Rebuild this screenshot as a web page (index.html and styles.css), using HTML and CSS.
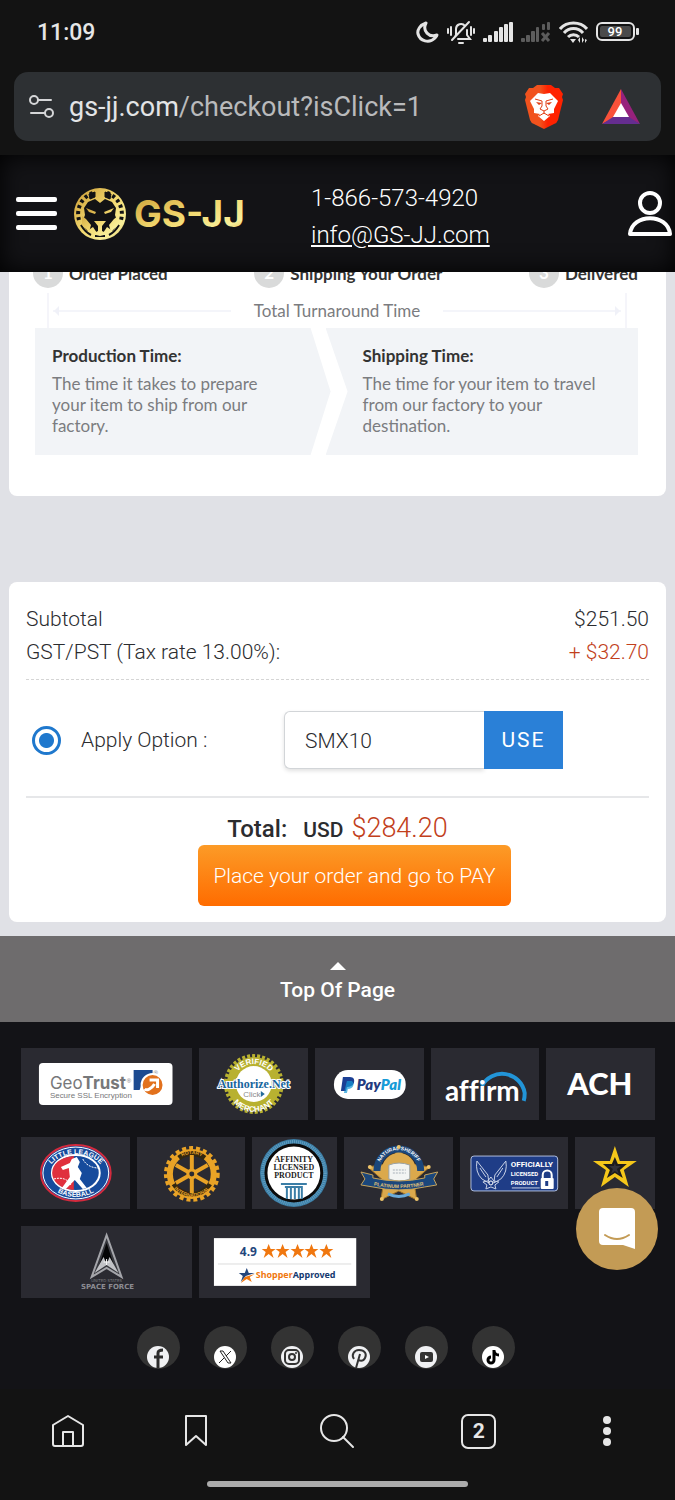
FILE: index.html
```html
<!DOCTYPE html>
<html lang="en">
<head>
    <meta charset="UTF-8">
    <meta name="viewport" content="width=device-width, initial-scale=1.0">
    <title>GS-JJ Checkout</title>
    <link rel="stylesheet" href="styles.css">
</head>
<body>

    <!-- phone status bar -->
    <div class="status-bar">
        <span class="time">11:09</span>
        <div class="status-icons">
            <svg width="23" height="24" viewBox="0 0 23 24"><path d="M10 3C4 5 1 10 2 14c2 7 11 10 17 4 1-1 2-2 2-3-8 3-15-4-11-12z" fill="none" stroke="#e4e4e4" stroke-width="3" stroke-linejoin="round"/></svg>
            <svg width="28" height="26" viewBox="0 0 28 26" fill="none" stroke="#e4e4e4" stroke-width="2" stroke-linecap="round"><path d="M7 19l2-3V10a5 5 0 0 1 9-3M20 11v5l3 4H11M12 24h4M5 21L22 3M4 8v8M1 10v4M24 8v8M27 10v4"/></svg>
            <svg width="30" height="22" viewBox="0 0 30 22" fill="#e4e4e4"><rect x="0" y="17" width="4" height="4" rx="1"/><rect x="5" y="14" width="4" height="7" rx="1"/><rect x="11" y="10" width="4" height="11" rx="1"/><rect x="16" y="6" width="4" height="15" rx="1"/><rect x="21" y="3" width="4" height="18" rx="1"/><rect x="26" y="1" width="4" height="20" rx="1"/></svg>
            <svg width="30" height="22" viewBox="0 0 30 22" fill="#5c5c5c"><rect x="0" y="17" width="4" height="4" rx="1"/><rect x="5" y="14" width="4" height="7" rx="1"/><rect x="10" y="10" width="4" height="11" rx="1"/><rect x="15" y="6" width="3" height="15" rx="1"/><rect x="21" y="3" width="3" height="6" rx="1"/><rect x="26" y="1" width="3" height="8" rx="1"/><path d="M21 12l7 8M28 12l-7 8" stroke="#5c5c5c" stroke-width="3"/></svg>
            <svg width="29" height="24" viewBox="0 0 29 24"><path d="M1 9c7-8 20-8 27 0M5 13c5-6 14-6 19 0M9 17c3-3 8-3 11 0" fill="none" stroke="#e4e4e4" stroke-width="3"/><path d="M11 19h6l-3 4zM19 20l2-3v6zM25 20l-2 3v-6zM26 19l2 1-2 3z" fill="#e4e4e4"/></svg>
            <svg width="43" height="20" viewBox="0 0 43 20"><rect x="1" y="1" width="37" height="17" rx="5" fill="none" stroke="#e4e4e4" stroke-width="2"/><rect x="4" y="4" width="31" height="11" rx="2" fill="#4a4a4a"/><rect x="40" y="6" width="3" height="7" rx="1" fill="#e4e4e4"/><text x="19" y="14" class="battery-text">99</text></svg>
        </div>
    </div>

    <!-- address bar -->
    <div class="address-bar">
        <svg width="26" height="26" viewBox="0 0 26 26" fill="none" stroke="#d5d6d8" stroke-width="2"><circle cx="6" cy="6" r="4"/><circle cx="21" cy="19" r="4"/><path d="M10 6h13M3 19h14" stroke-linecap="round"/></svg>
        <span class="url">gs-jj.com<span class="url-path">/checkout?isClick=1</span></span>
        <svg class="brave" width="38" height="44" viewBox="0 0 38 44">
            <defs><linearGradient id="brave"><stop offset="0.4" stop-color="#f1521d"/><stop offset="0.6" stop-color="#ff2200"/></linearGradient></defs>
            <path d="M12 0h14l4 3h4l4 6-1 3 1 3-5 20q-1 3-4 4l-10 5-10-5q-3-1-4-4L0 15l1-3-1-3 4-6h4z" fill="url(#brave)"/>
            <path d="M13 8l6 1 6-1 8 8-4 8v4l-6 1 2 2-6 5-6-5 2-2-6-1v-4l-4-8z" fill="#fff"/>
            <path d="M10 14l7 2M28 14l-7 2M17 16v5l-2 3 4 2 4-2-2-3v-5M19 26v3M14 31l5-3 5 3" fill="none" stroke="#e03c12" stroke-width="1"/>
            <path d="M11 17l6 1-3 2zM27 17l-6 1 3 2z" fill="#e03c12"/>
        </svg>
        <svg width="38" height="36" viewBox="0 0 38 36"><path d="M19 0L0 35l12-6 7-13z" fill="#f9513a"/><path d="M19 0l19 35-12-6-7-13z" fill="#97217c"/><path d="M0 35h38l-11-7H11z" fill="#652d90"/><path d="M19 14l8 14H11z" fill="#fff"/></svg>
    </div>

    <header class="site-header">
        <button class="menu-btn" aria-label="Menu"><span></span><span></span><span></span></button>
        <a class="logo" href="#" aria-label="GS-JJ home">
            <svg width="54" height="54" viewBox="0 0 54 54">
                <defs><linearGradient id="gold" x1="0" y1="0" x2="1" y2="1"><stop offset="0" stop-color="#c99a33"/><stop offset="0.5" stop-color="#f3d970"/><stop offset="0.8" stop-color="#f8ef9a"/><stop offset="1" stop-color="#d5ad3c"/></linearGradient></defs>
                <circle cx="27" cy="27" r="26" fill="url(#gold)"/>
                <g fill="none" stroke="#121214">
                    <path d="M6 33A22 22 0 0 1 20 6M34 6a22 22 0 0 1 14 27" stroke-width="4" stroke-dasharray="3 3"/>
                    <path d="M16 7l6-2v5l-5 2zM38 7l-6-2v5l5 2z" fill="#121214"/>
                    <path d="M8 38q4 7 10 10M46 38q-4 7-10 10M22 49h10" stroke-width="2"/>
                </g>
                <path d="M22 12l5 4 5-4 7 3 4 6-1 7 3 8-5 8-6-4-4 6h-6l-4-6-6 4-5-8 3-8-1-7 4-6z" fill="#121214"/>
                <path d="M13 21l10 4-1 2-6-2zM41 21l-10 4 1 2 6-2zM21 34h12l-4 5v5l6 3-8 2-8-2 6-3v-5zM9 29l4 3 5 6-2 7-7-7zM45 29l-4 3-5 6 2 7 7-7z" fill="url(#gold)"/>
            </svg>
            <svg width="114" height="46" viewBox="0 0 114 46"><text x="0" y="36" class="logo-text" fill="url(#gold)">GS-JJ</text></svg>
        </a>
        <div class="contact">
            <span>1-866-573-4920</span>
            <a href="#">info@GS-JJ.com</a>
        </div>
        <button class="user-btn" aria-label="Account">
            <svg width="44" height="46" viewBox="0 0 44 46" fill="none" stroke="#fff" stroke-width="4"><circle cx="22" cy="12" r="10"/><path d="M2 43c2-21 38-21 40 0z" stroke-linejoin="round"/></svg>
        </button>
    </header>

    <main>
        <section class="card turnaround">
            <div class="steps">
                <div class="step"><span class="num">1</span><b>Order Placed</b></div>
                <div class="step"><span class="num">2</span><b>Shipping Your Order</b></div>
                <div class="step"><span class="num">3</span><b>Delivered</b></div>
            </div>
            <div class="total-time">
                <span class="arrow left"></span>
                <span>Total Turnaround Time</span>
                <span class="arrow right"></span>
            </div>
            <div class="times">
                <div class="time-box production">
                    <h3>Production Time:</h3>
                    <p>The time it takes to prepare<br>your item to ship from our<br>factory.</p>
                </div>
                <div class="time-box shipping">
                    <h3>Shipping Time:</h3>
                    <p>The time for your item to travel<br>from our factory to your<br>destination.</p>
                </div>
            </div>
        </section>

        <section class="card summary">
            <div class="row"><span>Subtotal</span><span>$251.50</span></div>
            <div class="row"><span>GST/PST (Tax rate 13.00%):</span><span class="red">+ $32.70</span></div>
            <div class="option">
                <input type="radio" id="apply" name="option" checked>
                <label for="apply">Apply Option :</label>
                <div class="coupon">
                    <input type="text" value="SMX10" aria-label="Coupon code">
                    <button>USE</button>
                </div>
            </div>
            <div class="total"><b>Total:</b><span class="currency">USD</span><span class="red">$284.20</span></div>
            <button class="pay-btn">Place your order and go to PAY</button>
        </section>
    </main>

    <a class="top-link" href="#"><span class="triangle"></span>Top Of Page</a>

    <footer>
        <div class="badges">
            <div class="badge wide">
                <svg viewBox="0 0 172 72">
                    <rect x="18" y="15" width="134" height="42" rx="4" fill="#fff"/>
                    <text x="29" y="41" class="geo">Geo<tspan class="bold">Trust</tspan></text>
                    <text x="29" y="50" class="geo-sub">Secure SSL Encryption</text>
                    <text x="106" y="35" class="reg">®</text><text x="133" y="27" class="reg">®</text>
                    <path d="M113 22h19v6l-10 5-3 9h-6z" fill="#1b4a91"/>
                    <circle cx="132" cy="37" r="11" fill="#e2711d" stroke="#fff" stroke-width="2"/>
                    <path d="M124 41c2 2 7 0 10-5M129 32h8v8" fill="none" stroke="#fff" stroke-width="3"/>
                </svg>
            </div>
            <div class="badge">
                <svg viewBox="0 0 109 72">
                    <defs><path id="auth-top" d="M34 37a21 21 0 0 1 42 0"/><path id="auth-bottom" d="M28 37a27 27 0 0 0 54 0"/></defs>
                    <circle cx="55" cy="36" r="27" fill="#b8b130"/>
                    <circle cx="55" cy="36" r="28" fill="none" stroke="#b8b130" stroke-width="4" stroke-dasharray="3 2"/>
                    <circle cx="55" cy="36" r="18" fill="#fff"/>
                    <text class="auth-arc"><textPath href="#auth-top" startOffset="50%">VERIFIED</textPath></text>
                    <text class="auth-arc"><textPath href="#auth-bottom" startOffset="50%">MERCHANT</textPath></text>
                    <text x="55" y="40" class="auth-name">Authorize.Net</text>
                    <text x="53" y="49" class="auth-click">Click</text><path d="M62 43l4 3-4 3z" fill="#236a9c"/>
                </svg>
            </div>
            <div class="badge">
                <svg viewBox="0 0 109 72">
                    <rect x="19" y="22" width="72" height="29" rx="14" fill="#fff"/>
                    <path d="M28 29h7c4 0 5 3 4 6-1 3-4 4-7 4l-1 4h-5z" fill="#1b3f94"/>
                    <path d="M32 33h5c3 2 2 8-4 8l-1 4h-3z" fill="#1599d6" opacity="0.7"/>
                    <text x="42" y="42" class="paypal">Pay<tspan fill="#179bd7">Pal</tspan></text>
                </svg>
            </div>
            <div class="badge">
                <svg viewBox="0 0 109 72">
                    <path d="M51 38A23 23 0 0 1 94 45q0 5-1 8" fill="none" stroke="#2295d8" stroke-width="4"/>
                    <text x="14" y="53" class="affirm">af<tspan>f</tspan>irm</text>
                </svg>
            </div>
            <div class="badge">
                <svg viewBox="0 0 109 72"><text x="54" y="47" class="ach">ACH</text></svg>
            </div>
        </div>

        <div class="badges">
            <div class="badge">
                <svg viewBox="0 0 109 72">
                    <defs><path id="ll-top" d="M27 37a28 20 0 0 1 56 0"/><path id="ll-bottom" d="M24 35a31 25 0 0 0 62 0"/></defs>
                    <ellipse cx="55" cy="36" rx="35" ry="28" fill="#164b9c" stroke="#d42a3d" stroke-width="2"/>
                    <ellipse cx="55" cy="36" rx="33" ry="26" fill="none" stroke="#fff"/>
                    <ellipse cx="55" cy="36" rx="24" ry="18" fill="#164b9c" stroke="#fff" stroke-width="2"/>
                    <path d="M53 19c-29 2-29 32 0 34z" fill="#e0303d"/>
                    <path d="M33 42c8-2 14 0 17 6M62 22c3 6 9 9 16 9" fill="none" stroke="#fff" stroke-dasharray="2 1"/>
                    <path d="M51 22l5-2 3 5-2 5 4 6-2 6 7 9-4 1-8-9-9 9-4-1 8-11-1-9-6 2-2-3 9-4z" fill="#fff"/>
                    <text class="ll-arc"><textPath href="#ll-top" startOffset="50%">LITTLE LEAGUE</textPath></text>
                    <text class="ll-arc"><textPath href="#ll-bottom" startOffset="50%">BASEBALL</textPath></text>
                </svg>
            </div>
            <div class="badge">
                <svg viewBox="0 0 109 72" fill="none" stroke="#e9a326">
                    <defs><path id="rot-top" d="M35 37a20 20 0 0 1 40 0"/><path id="rot-bottom" d="M32 37a23 23 0 0 0 46 0"/></defs>
                    <circle cx="55" cy="37" r="26" stroke-width="4" stroke-dasharray="4 3"/>
                    <circle cx="55" cy="37" r="22" stroke-width="6"/>
                    <path d="M42 21a21 21 0 0 1 26 0M37 47a21 21 0 0 0 36 0" stroke="#33280f" stroke-width="5"/>
                    <path d="M55 18v38M39 28l32 18M71 28L39 46" stroke-width="4"/>
                    <circle cx="55" cy="37" r="4" fill="#2a2a31" stroke-width="3"/>
                    <text class="rot-arc"><textPath href="#rot-top" startOffset="50%">ROTARY</textPath></text>
                    <text class="rot-arc"><textPath href="#rot-bottom" startOffset="50%">INTERNATIONAL</textPath></text>
                </svg>
            </div>
            <div class="badge small">
                <svg viewBox="0 0 85 72">
                    <circle cx="42" cy="36" r="34" fill="#3b7ea6"/>
                    <circle cx="42" cy="36" r="31" fill="none" stroke="#5f9cbf" stroke-width="4" stroke-dasharray="1 1"/>
                    <circle cx="42" cy="36" r="28" fill="#fff" stroke="#0b0b0b" stroke-width="3"/>
                    <text class="affinity" x="42" y="25">AFFINITY</text>
                    <text class="affinity" x="42" y="33">LICENSED</text>
                    <text class="affinity" x="42" y="41">PRODUCT</text>
                    <path d="M29 47h26M33 50h18" stroke="#3b7ea6" stroke-width="2"/>
                    <path d="M35 51v11M39 51v11M43 51v11M47 51v11M50 51v11" stroke="#3b7ea6" stroke-width="2"/>
                </svg>
            </div>
            <div class="badge">
                <svg viewBox="0 0 109 72">
                    <defs><path id="ns-top" d="M34 34a21 21 0 0 1 42 0"/><path id="ns-ribbon" d="M28 48q27 6 54 0"/></defs>
                    <path d="M55 8l7 18 24 4-16 14 3 19-18-9-18 9 3-19-16-14 24-4z" fill="#dba94c" stroke="#a57628"/>
                    <path d="M33 34a22 22 0 0 1 44 0" fill="none" stroke="#1b477b" stroke-width="7"/>
                    <path d="M38 33a17 17 0 0 1 34 0z" fill="#dba94c"/>
                    <g fill="#edc46b"><circle cx="55" cy="10" r="2"/><circle cx="26" cy="30" r="2"/><circle cx="85" cy="30" r="2"/><circle cx="38" cy="62" r="2"/><circle cx="73" cy="62" r="2"/></g>
                    <path d="M45 28q10-4 21 0v14q-10 4-21 0z" fill="#f2f4f3" stroke="#9aa2a5"/>
                    <path d="M49 33h13M49 36h13" stroke="#a9b2b9" stroke-dasharray="2 1"/>
                    <path d="M17 35l12 3v3q26 6 52 0v-3l13-3-4 7 3 6-12 2q-26 6-52 0l-12-2 4-6z" fill="#1b477b" stroke="#c7a45c"/>
                    <path d="M44 57q11 5 22 0" fill="none" stroke="#6babd9" stroke-width="3"/>
                    <text class="ns-text"><textPath href="#ns-top" startOffset="50%">NATURAL SHERIFF</textPath></text>
                    <text class="ns-text gold"><textPath href="#ns-ribbon" startOffset="50%">PLATINUM PARTNER</textPath></text>
                </svg>
            </div>
            <div class="badge">
                <svg viewBox="0 0 109 72">
                    <rect x="11" y="19" width="87" height="35" rx="3" fill="#1f3d87" stroke="#aebcdb"/>
                    <path d="M17 24l11 14 1 8-7-4q-7-7-5-18zM46 24L35 38l-1 8 7-4q7-7 5-18z" fill="none" stroke="#c9d2e6"/>
                    <path d="M20 31l6 9M43 31l-6 9M31 40l3 4 5 1-4 3 1 4-5-2-5 2 1-4-4-3 5-1z" fill="none" stroke="#c9d2e6"/>
                    <circle cx="31" cy="46" r="2" fill="none" stroke="#fff"/>
                    <text class="official" x="51" y="30">OFFICIALLY</text>
                    <text class="official second" x="51" y="39">LICENSED</text>
                    <text class="official second" x="51" y="48">PRODUCT</text>
                    <path d="M52 51h28" stroke="#c9d2e6"/>
                    <path d="M83 42v-4a4 4 0 0 1 9 0v4" fill="none" stroke="#fff" stroke-width="2"/>
                    <rect x="81" y="41" width="13" height="11" rx="1" fill="#fff"/><path d="M87 44v5" stroke="#1f3d87" stroke-width="3"/>
                </svg>
            </div>
            <div class="badge smaller">
                <svg viewBox="0 0 80 72">
                    <path d="M40 9l5 15h17L49 33l5 17-14-10-14 10 5-17-13-9h17z" fill="#f5c71a"/>
                    <path d="M40 20l3 7h9l-7 6 3 8-8-5-8 5 3-8-7-6h9z" fill="#1d1c1c"/>
                    <path d="M40 26l1 3h5l-4 3 2 5-4-3-4 3 2-5-4-3h5z" fill="#33333a"/>
                </svg>
            </div>
        </div>

        <div class="badges last">
            <div class="badge">
                <svg viewBox="0 0 172 72">
                    <path d="M86 9l15 42-15-9-15 9z" fill="#37383e" stroke="#a4a5aa" stroke-width="2"/>
                    <path d="M86 17l8 24-8-6-8 6z" fill="#050506"/>
                    <path d="M74 47l9-16 3 7 3-7 9 16-12-8z" fill="#c1c2c6"/>
                    <path d="M86 33v6M83 36h6" stroke="#fff"/>
                    <text class="sf-small" x="86" y="56">UNITED STATES</text>
                    <text class="sf" x="87" y="63">SPACE FORCE</text>
                </svg>
            </div>
            <div class="badge">
                <svg viewBox="0 0 172 72">
                    <defs><path id="star" d="M0-7l2 5h5L3 1l2 6-5-4-5 4 2-6-4-3h5z"/></defs>
                    <rect x="15" y="12" width="143" height="48" fill="#fff"/>
                    <text class="rating" x="41" y="30">4.9</text>
                    <g fill="#f0770f"><use href="#star" x="70" y="25"/><use href="#star" x="84" y="25"/><use href="#star" x="99" y="25"/><use href="#star" x="113" y="25"/><use href="#star" x="128" y="25"/></g>
                    <path d="M19 38h134" stroke="#dcdcdc"/>
                    <path d="M48 42l2 5h6l-9 3-5 6 2-6-4-3h6z" fill="#24467c"/><path d="M56 48l-5 3 2 5-5-3-6 4 4-6z" fill="#f0770f"/>
                    <text class="shopper" x="57" y="52">Shopper<tspan fill="#14396f">Approved</tspan></text>
                </svg>
            </div>
        </div>

        <nav class="social">
            <a href="#" aria-label="Facebook"><svg viewBox="0 0 43 43"><circle cx="21" cy="31" r="11" fill="#f0f1f3"/><path d="M21 42V27q0-3 5-3M17 31h9" fill="none" stroke="#2c2c2c" stroke-width="3"/></svg></a>
            <a href="#" aria-label="X"><svg viewBox="0 0 43 43"><circle cx="21" cy="31" r="11" fill="#fff"/><path d="M16 25h3l8 12h-3zM27 25l-5 5M20 32l-5 5" fill="none" stroke="#222"/></svg></a>
            <a href="#" aria-label="Instagram"><svg viewBox="0 0 43 43"><circle cx="21" cy="31" r="11" fill="#f0f1f3"/><rect x="14" y="24" width="14" height="14" rx="4" fill="none" stroke="#333" stroke-width="2"/><circle cx="21" cy="31" r="3" fill="none" stroke="#333" stroke-width="2"/><circle cx="25" cy="27" r="1" fill="#333"/></svg></a>
            <a href="#" aria-label="Pinterest"><svg viewBox="0 0 43 43"><circle cx="21" cy="31" r="11" fill="#f0f1f3"/><path d="M16 33c-3-4 0-9 5-9 6 0 8 4 6 8-2 4-6 3-7 1M22 28l-4 14" fill="none" stroke="#333" stroke-width="2"/></svg></a>
            <a href="#" aria-label="YouTube"><svg viewBox="0 0 43 43"><circle cx="21" cy="31" r="11" fill="#f0f1f3"/><rect x="15" y="26" width="13" height="10" rx="2" fill="#333"/><path d="M20 29l4 2-4 2z" fill="#fff"/></svg></a>
            <a href="#" aria-label="TikTok"><svg viewBox="0 0 43 43"><circle cx="21" cy="31" r="11" fill="#fff"/><path d="M22 24v10a3 3 0 1 1-3-3M22 25q1 4 5 4" fill="none" stroke="#000" stroke-width="3"/></svg></a>
        </nav>

        <button class="chat-btn" aria-label="Open chat">
            <svg width="82" height="82" viewBox="0 0 82 82"><path d="M27 20h28q4 0 4 4v37l-12-4H27q-4 0-4-4V24q0-4 4-4z" fill="#fff"/><path d="M29 47q12 8 24 0" fill="none" stroke="#c39b55" stroke-width="2" stroke-linecap="round"/></svg>
        </button>
    </footer>

    <!-- browser toolbar -->
    <div class="toolbar">
        <button aria-label="Home"><svg width="32" height="34" viewBox="0 0 32 34"><path d="M1 11L16 2l15 9v19q0 2-2 2H3q-2 0-2-2zM11 32V18h10v14"/></svg></button>
        <button aria-label="Bookmarks"><svg width="24" height="34" viewBox="0 0 24 34"><path d="M2 2h20v29l-10-9-10 9z"/></svg></button>
        <button aria-label="Search"><svg width="36" height="36" viewBox="0 0 36 36"><circle cx="15" cy="15" r="13"/><path d="M24 24l10 10"/></svg></button>
        <button aria-label="Tabs" class="tabs">2</button>
        <button aria-label="More"><svg width="8" height="30" viewBox="0 0 8 30"><g fill="#e6e6e6" stroke="none"><circle cx="4" cy="4" r="4"/><circle cx="4" cy="15" r="4"/><circle cx="4" cy="26" r="4"/></g></svg></button>
    </div>
    <div class="home-indicator"></div>

</body>
</html>
```
FILE: styles.css
```css
* {
    box-sizing: border-box;
}

body {
    margin: 0;
    background-color: #131313;
    font-family: Roboto, 'Liberation Sans', sans-serif;
    font-weight: 300;
    font-size: 21px;
    color: #2b2c2f;
}

svg {
    display: block;
}

button {
    padding: 0;
    border: none;
    background: none;
    font-family: inherit;
    font-weight: inherit;
    cursor: pointer;
}

/* Status bar */
.status-bar {
    display: flex;
    align-items: center;
    justify-content: space-between;
    height: 64px;
    padding: 0 36px 0 37px;
}

.time {
    font-size: 23px;
    font-weight: 500;
    color: #e6e6e6;
}

.status-icons {
    display: flex;
    align-items: center;
    gap: 8px;
}

.battery-text {
    font-size: 13px;
    font-weight: 500;
    fill: #fff;
    text-anchor: middle;
}

/* Address bar */
.address-bar {
    display: flex;
    align-items: center;
    height: 69px;
    margin: 8px 14px 14px;
    padding: 0 21px 0 14px;
    border-radius: 14px;
    background-color: #2d3033;
}

.url {
    margin-left: 15px;
    font-size: 27px;
    font-weight: 400;
    color: #e3e4e6;
}

.url-path {
    color: #b9babc;
}

.brave {
    margin-left: auto;
    margin-right: 39px;
}

/* Site header */
.site-header {
    position: relative;
    display: flex;
    align-items: center;
    height: 117px;
    padding: 0 3px 0 16px;
    background-color: #131316;
    box-shadow: inset 0 0 24px #000;
    color: #fff;
}

.menu-btn {
    display: flex;
    flex-direction: column;
    gap: 9px;
    width: 41px;
}

.menu-btn span {
    height: 5px;
    border-radius: 2px;
    background-color: #fff;
}

.logo {
    display: flex;
    align-items: center;
    gap: 7px;
    margin-left: 16px;
}

.logo-text {
    font-family: Inter, sans-serif;
    font-size: 37px;
    font-weight: 700;
}

.contact {
    display: flex;
    flex-direction: column;
    margin-left: 63px;
    padding-top: 6px;
    font-size: 24px;
    line-height: 37px;
}

.contact a {
    color: #fff;
}

.user-btn {
    margin-left: auto;
}

/* Page */
main {
    padding: 0 9px 14px;
    background-color: #e0e1e6;
}

.card {
    border-radius: 8px;
    background-color: #fff;
}

.turnaround {
    overflow: hidden;
    margin-bottom: 86px;
    padding: 0 28px 41px 26px;
    border-radius: 0 0 8px 8px;
    font-family: Lato, sans-serif;
    font-weight: 400;
    font-size: 17px;
    color: #7b7c80;
}

.steps {
    display: flex;
    justify-content: space-between;
    margin-top: -14px;
    margin-left: -2px;
}

.step {
    display: flex;
    align-items: center;
    gap: 6px;
    color: #333;
}

.num {
    width: 30px;
    height: 30px;
    border-radius: 50%;
    background-color: #d9dada;
    color: #fff;
    font-weight: 700;
    line-height: 30px;
    text-align: center;
}

.total-time {
    display: flex;
    align-items: center;
    justify-content: space-between;
    height: 35px;
    margin: 5px 11px 0 12px;
    border-left: 2px solid #f5f5fa;
    border-right: 2px solid #f5f5fa;
}

.arrow {
    position: relative;
    width: 178px;
    height: 2px;
    margin: 0 4px;
    background-color: #f4f5fa;
}

.arrow::before {
    content: "";
    position: absolute;
    top: -4px;
    border: 5px solid transparent;
}

.arrow.left::before {
    left: -4px;
    border-right-color: #f0f1f8;
}

.arrow.right::before {
    right: -4px;
    border-left-color: #f0f1f8;
}

.times {
    display: grid;
    grid-template-columns: 300fr 312fr;
    margin-right: -9px;
    padding-right: 9px;
}

.time-box {
    height: 127px;
    padding: 18px 0 0 17px;
    background-color: #f2f4f7;
}

.time-box h3 {
    margin: 0 0 7px;
    font-size: 17px;
    line-height: 20px;
    color: #333;
}

.time-box p {
    margin: 0;
    line-height: 21px;
}

.production {
    clip-path: polygon(0 0, calc(100% - 20px) 0, 100% 50%, calc(100% - 20px) 100%, 0 100%);
}

.shipping {
    margin-left: -5px;
    padding-left: 37px;
    clip-path: polygon(0 0, 100% 0, 100% 100%, 0 100%, 22px 50%);
}

/* Order summary */
.summary {
    padding: 21px 17px 16px;
}

.row {
    display: flex;
    justify-content: space-between;
    line-height: 33px;
}

.red {
    color: #c23f1c;
}

.option {
    display: flex;
    align-items: center;
    margin-top: 10px;
    padding: 31px 0 27px 6px;
    border-top: 1px dashed #d5d5d5;
    border-bottom: 2px solid #e6e7e9;
}

.option input[type="radio"] {
    appearance: none;
    width: 29px;
    height: 29px;
    margin: 0 20px 0 0;
    border: 3px solid #1f78cd;
    border-radius: 50%;
    background: radial-gradient(circle, #1f78cd 7px, #fff 8px);
}

.coupon {
    display: flex;
    height: 58px;
    margin-left: auto;
    margin-right: 86px;
}

.coupon input {
    width: 200px;
    padding: 2px 20px 0;
    border: 1px solid #d2d5d8;
    border-right: none;
    border-radius: 6px 0 0 6px;
    box-shadow: 0 2px 4px rgba(0, 0, 0, 0.12);
    font-family: inherit;
    font-size: 21px;
    font-weight: 300;
    color: #2b2c2f;
}

.coupon button {
    width: 79px;
    background-color: #2a80d7;
    color: #fff;
    font-size: 21px;
    font-weight: 400;
    letter-spacing: 2px;
}

.total {
    display: flex;
    align-items: baseline;
    justify-content: center;
    height: 47px;
    padding-top: 14px;
    font-size: 27px;
    line-height: 33px;
}

.total b {
    margin-right: 16px;
    font-size: 24px;
    font-weight: 500;
}

.currency {
    margin-right: 8px;
    font-weight: 500;
    font-size: 21px;
}

.pay-btn {
    display: block;
    position: relative;
    left: 17px;
    height: 61px;
    margin: 0 auto;
    padding: 0 15px;
    border-radius: 6px;
    background-image: linear-gradient(#fc9b27, #ff6c00);
    color: #fff;
    font-size: 21px;
}

/* Footer */
.top-link {
    display: flex;
    flex-direction: column;
    align-items: center;
    gap: 8px;
    height: 86px;
    padding-top: 26px;
    background-color: #6e6c6d;
    color: #fff;
    font-weight: 500;
    text-decoration: none;
}

.triangle {
    border: 8px solid transparent;
    border-top: none;
    border-bottom-color: #fff;
}

footer {
    position: relative;
    padding: 26px 20px 20px 21px;
    background-color: #131317;
}

.badges {
    display: flex;
    gap: 7px;
    margin-bottom: 17px;
}

.badge {
    flex: 109 1 0;
    min-width: 0;
    background-color: #2a2a31;
}

.badge svg {
    width: 100%;
    height: 72px;
}

.badge.wide {
    flex-grow: 172;
}

.badge.small {
    flex-grow: 85;
}

.badge.smaller {
    flex-grow: 80;
}

.badges.last .badge {
    flex: 0 0 27%;
}

/* Badge lettering */
.geo {
    font: 400 17px Inter, sans-serif;
    fill: #77787a;
}

.bold {
    font-weight: 700;
}

.geo-sub {
    font: 400 8px 'Liberation Sans', sans-serif;
    fill: #77787a;
}

.reg {
    font: 400 6px 'Liberation Sans', sans-serif;
    fill: #77787a;
}

.auth-arc,
.ll-arc {
    font: 700 8px 'Liberation Sans', sans-serif;
    fill: #fff;
    text-anchor: middle;
}

.auth-name {
    font: 700 12px 'Liberation Serif', serif;
    fill: #17659d;
    stroke: #fff;
    stroke-width: 2px;
    paint-order: stroke;
    text-anchor: middle;
}

.auth-click {
    font: 400 8px 'Liberation Sans', sans-serif;
    fill: #8b8b8b;
    text-anchor: middle;
}

.paypal {
    font: italic 800 15px Lato, sans-serif;
    fill: #243b80;
}

.affirm {
    font: 700 28px Lato, sans-serif;
    font-variant-ligatures: none;
    fill: #fff;
}

.ach {
    font: 900 31px Lato, sans-serif;
    fill: #fff;
    text-anchor: middle;
}

.ll-arc {
    font-size: 7px;
}

.rot-arc {
    font: 700 5px 'Liberation Sans', sans-serif;
    fill: #e9a326;
    stroke: none;
    text-anchor: middle;
}

.affinity {
    font: 700 8px 'Liberation Serif', serif;
    fill: #222;
    text-anchor: middle;
}

.ns-text {
    font: 700 5px 'Liberation Sans', sans-serif;
    fill: #fff;
    text-anchor: middle;
}

.ns-text.gold {
    fill: #e0c37a;
}

.official {
    font: 700 8px Roboto, sans-serif;
    fill: #fff;
}

.official.second {
    font-size: 6px;
}

.sf {
    font: 700 7px 'DejaVu Sans', sans-serif;
    fill: #8c8c92;
    text-anchor: middle;
}

.sf-small {
    font: 400 4px 'DejaVu Sans', sans-serif;
    fill: #77777c;
    text-anchor: middle;
}

.rating {
    font: 700 12px 'Noto Sans', sans-serif;
    fill: #24467c;
}

.shopper {
    font: 700 9px 'Noto Sans', sans-serif;
    fill: #f0770f;
}

.social {
    display: flex;
    justify-content: center;
    gap: 24px;
    margin-top: 28px;
    padding-right: 24px;
}

.social a {
    width: 43px;
    height: 43px;
    border-radius: 50%;
    background-color: #333;
}

.chat-btn {
    position: absolute;
    top: 166px;
    right: 17px;
    border-radius: 50%;
    background-color: #c39b55;
}

/* Browser toolbar */
.toolbar {
    display: grid;
    grid-template-columns: 128fr 128fr 154fr 128fr 128fr;
    align-items: center;
    justify-items: center;
    height: 84px;
    padding: 0 4px;
}

.toolbar svg {
    fill: none;
    stroke: #e6e6e6;
    stroke-width: 2px;
    stroke-linecap: round;
    stroke-linejoin: round;
}

.tabs {
    width: 35px;
    height: 35px;
    border: 2px solid #e6e6e6;
    border-radius: 7px;
    color: #e6e6e6;
    font-size: 21px;
    font-weight: 700;
}

.home-indicator {
    width: 261px;
    height: 6px;
    margin: 8px auto 13px;
    border-radius: 3px;
    background-color: #acacac;
}
```
